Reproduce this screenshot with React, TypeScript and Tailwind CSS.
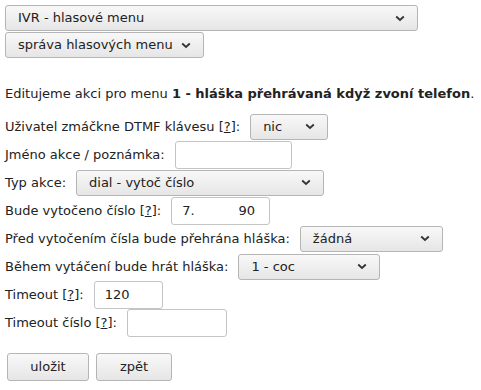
import React from "react";

const font = { fontFamily: '"DejaVu Sans", "Noto Sans", sans-serif' };

function Chevron() {
  return (
    <svg width="10" height="7" viewBox="0 0 10 7" className="shrink-0">
      <path d="M1.2 1.5 L5 5 L8.8 1.5" fill="none" stroke="#333" strokeWidth="1.8" />
    </svg>
  );
}

function Select({ value, className }: { value: string; className: string }) {
  return (
    <div
      className={`flex h-[26px] items-center justify-between rounded-[3px] border border-[#b5b5b5] bg-gradient-to-b from-[#f8f8f8] to-[#e6e6e6] pl-[12px] pr-[12px] text-[13px] text-[#222] ${className}`}
    >
      <span className="whitespace-nowrap">{value}</span>
      <Chevron />
    </div>
  );
}

function Input({ children, className }: { children?: React.ReactNode; className: string }) {
  return (
    <div
      className={`flex h-[28px] items-center rounded-[3px] border border-[#c4c4c4] bg-white px-[10px] text-[13px] text-[#222] ${className}`}
    >
      {children}
    </div>
  );
}

function Help() {
  return (
    <>
      [<span className="underline">?</span>]
    </>
  );
}

function Row({ children }: { children: React.ReactNode }) {
  return <div className="flex h-[28px] items-center gap-[10px] whitespace-nowrap">{children}</div>;
}

export default function App() {
  return (
    <div className="h-[390px] w-[481px] bg-white pl-[5px] text-[13px] text-[#222]" style={font}>
      <div className="flex flex-col gap-[1px] pt-[5px]">
        <Select value="IVR - hlasové menu" className="w-[413px]" />
        <Select value="správa hlasových menu" className="w-[199px]" />
      </div>

      <p className="mt-[26px] mb-[9px] whitespace-nowrap">
        Editujeme akci pro menu <b>1 - hláška přehrávaná když zvoní telefon</b>.
      </p>

      <div className="flex flex-col">
        <Row>
          <span>
            Uživatel zmáčkne DTMF klávesu <Help />:
          </span>
          <Select value="nic" className="w-[78px]" />
        </Row>
        <Row>
          <span>Jméno akce / poznámka:</span>
          <Input className="w-[117px]" />
        </Row>
        <Row>
          <span>Typ akce:</span>
          <Select value="dial - vytoč číslo" className="w-[248px]" />
        </Row>
        <Row>
          <span>
            Bude vytočeno číslo <Help />:
          </span>
          <Input className="w-[99px]">
            <span>7.</span>
            <span className="ml-[44px]">90</span>
          </Input>
        </Row>
        <Row>
          <span>Před vytočením čísla bude přehrána hláška:</span>
          <Select value="žádná" className="w-[143px]" />
        </Row>
        <Row>
          <span>Během vytáčení bude hrát hláška:</span>
          <Select value="1 - coc" className="w-[142px]" />
        </Row>
        <Row>
          <span>
            Timeout <Help />:
          </span>
          <Input className="w-[69px]">120</Input>
        </Row>
        <Row>
          <span>
            Timeout číslo <Help />:
          </span>
          <Input className="w-[100px]" />
        </Row>
      </div>

      <div className="mt-[16px] flex gap-[7px] pl-[2px]">
        <button className="h-[28px] w-[82px] rounded-[3px] border border-[#b5b5b5] bg-gradient-to-b from-[#f8f8f8] to-[#e6e6e6] text-[13px] text-[#222]">
          uložit
        </button>
        <button className="h-[28px] w-[76px] rounded-[3px] border border-[#b5b5b5] bg-gradient-to-b from-[#f8f8f8] to-[#e6e6e6] text-[13px] text-[#222]">
          zpět
        </button>
      </div>
    </div>
  );
}
